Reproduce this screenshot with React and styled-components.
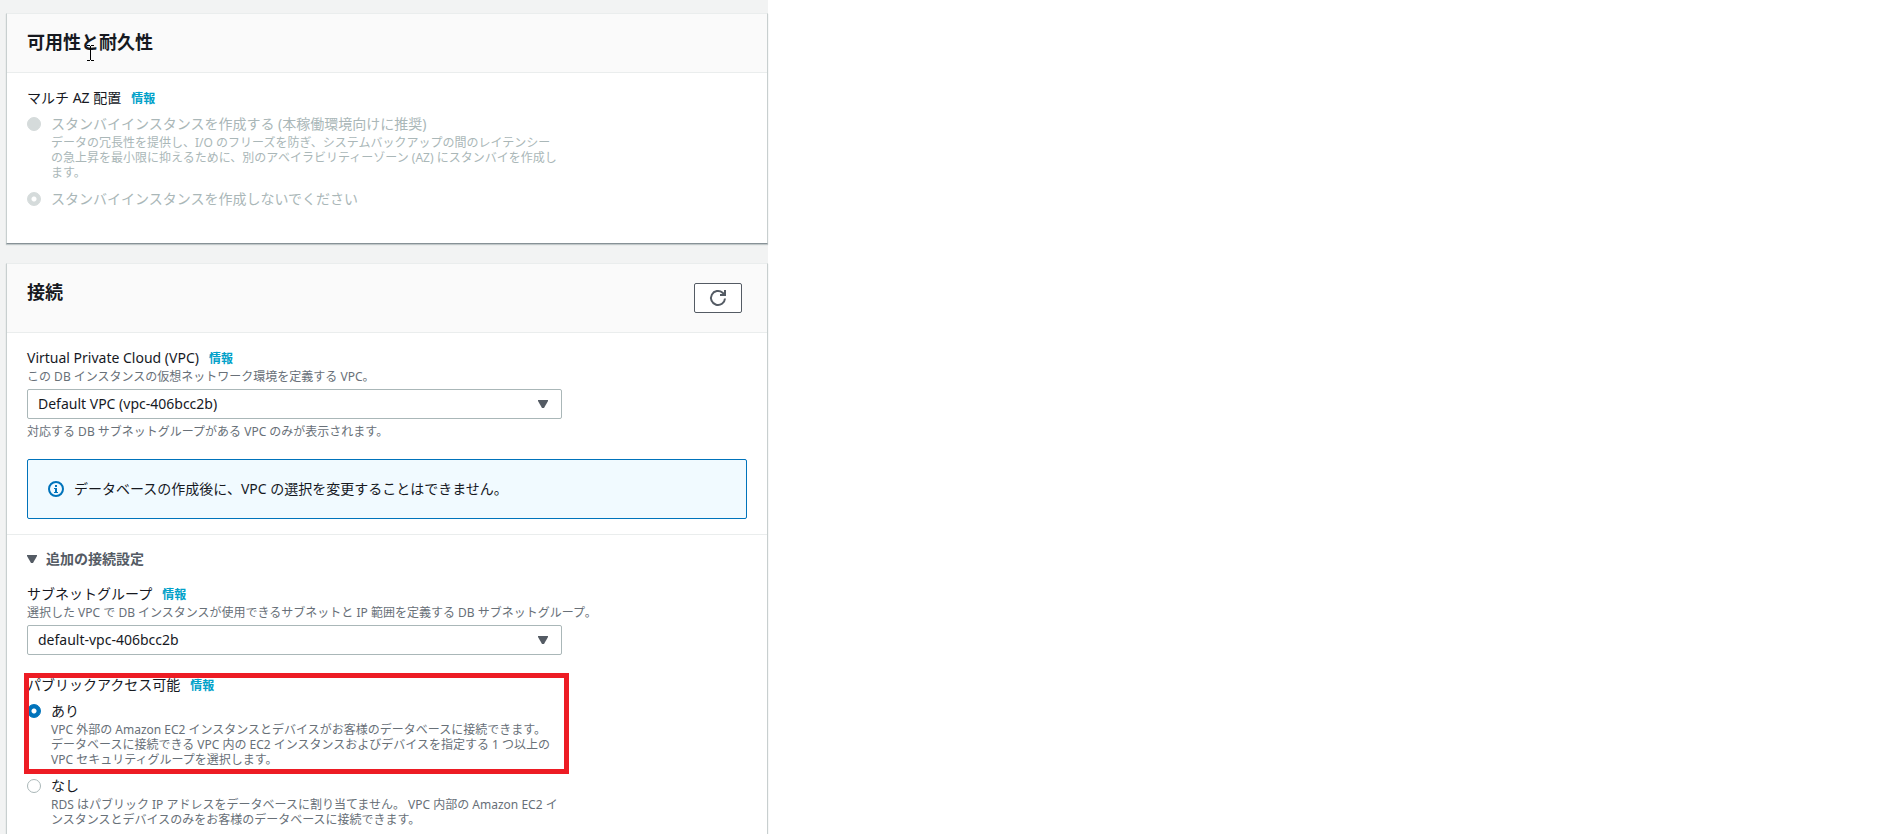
import React, { useState } from "react";
import styled, { createGlobalStyle, css } from "styled-components";

const GlobalStyle = createGlobalStyle`
  * {
    box-sizing: border-box;
  }
  body {
    margin: 0;
    background: #ffffff;
    color: #16191f;
    font-family: "Noto Sans", "Noto Sans CJK JP", sans-serif;
    font-size: 14px;
    line-height: 22px;
  }
`;

const Page = styled.main`
  display: flex;
  flex-direction: column;
  gap: 19px;
  width: 100%;
  max-width: 768px;
  min-height: 100vh;
  padding: 13px 0 0 6px;
  background: #f2f3f3;
`;
const Panel = styled.section`
  border: 1px solid #c8cfcf;
  border-top-color: #eaeded;
  border-bottom-color: #879196;
  background: #ffffff;
  box-shadow: 0 1px 1px rgba(0, 28, 36, 0.2);
  ${(p) =>
    p.$grow &&
    css`
      flex: 1;
      border-bottom: none;
    `}
`;
const Header = styled.header`
  display: flex;
  justify-content: space-between;
  align-items: flex-start;
  padding: 17px 25px 19px 20px;
  border-bottom: 1px solid #eaeded;
  background: #fafafa;
`;
const Title = styled.h2`
  position: relative;
  margin: 0;
  font-size: 18px;
  font-weight: bold;
  line-height: 22px;
`;
const Caret = styled.svg`
  position: absolute;
  left: 60px;
  top: 14px;
`;
const RefreshButton = styled.button`
  display: flex;
  align-items: center;
  justify-content: center;
  width: 48px;
  height: 30px;
  margin: 2px 0 0;
  padding: 0;
  border: 1px solid #545b64;
  border-radius: 2px;
  background: #ffffff;
  color: #545b64;
`;
const Content = styled.div`
  padding: 14px 20px ${(p) => p.$bottom || 0}px;
`;
const Field = styled.div`
  position: relative;
  max-width: 535px;
`;
const Group = styled.fieldset`
  position: relative;
  max-width: 535px;
  margin: 0;
  padding: 0;
  border: none;
`;
const LabelRow = styled.div`
  display: flex;
  align-items: baseline;
  gap: 10px;
`;
const Info = styled.a`
  color: #00a1c9;
  font-size: 12px;
  font-weight: bold;
  line-height: 15px;
  text-decoration: none;
`;
const Hint = styled.p`
  margin: 0;
  color: ${(p) => (p.$disabled ? "#aab7b8" : "#687078")};
  font-size: 12px;
  line-height: 15px;
  white-space: ${(p) => (p.$nowrap ? "nowrap" : "normal")};
`;
const SelectBox = styled.div`
  position: relative;
  margin: 5px 0;
`;
const Select = styled.select`
  display: block;
  width: 100%;
  height: 30px;
  padding: 0 32px 0 10px;
  border: 1px solid #aab7b8;
  border-radius: 2px;
  appearance: none;
  background: #ffffff;
  color: #16191f;
  font: inherit;
`;
const SelectArrow = styled.svg`
  position: absolute;
  top: 11px;
  right: 14px;
  pointer-events: none;
`;
const Option = styled.div`
  display: grid;
  grid-template-columns: 14px 1fr;
  column-gap: 10px;
  align-items: center;
  margin-top: ${(p) => (p.$first ? 4 : 8)}px;
  color: ${(p) => (p.$disabled ? "#aab7b8" : "#16191f")};
  & > p {
    grid-column: 2;
  }
`;
const Radio = styled.input`
  width: 14px;
  height: 14px;
  margin: 0;
  border: 1px solid #aab7b8;
  border-radius: 50%;
  appearance: none;
  background: #ffffff;
  &:checked {
    border-color: #0073bb;
    background: radial-gradient(circle, #ffffff 2px, #0073bb 3px);
  }
  &:disabled {
    border-color: #d5dbdb;
    background: #d5dbdb;
  }
  &:disabled:checked {
    background: radial-gradient(circle, #ffffff 2px, #d5dbdb 3px);
  }
`;
const Alert = styled.div`
  display: flex;
  align-items: center;
  gap: 10px;
  margin: 20px 0 15px;
  padding: 18px 20px;
  border: 1px solid #0073bb;
  border-radius: 2px;
  background: #f1faff;
`;
const Extra = styled.div`
  padding: 13px 20px 0;
  border-top: 1px solid #eaeded;
`;
const Toggle = styled.button`
  display: flex;
  align-items: center;
  gap: 9px;
  margin: 0 0 13px;
  padding: 0;
  border: none;
  background: none;
  color: #545b64;
  font: inherit;
  font-weight: bold;
`;
const Access = styled.div`
  position: relative;
  max-width: 535px;
  margin-top: 19px;
`;
const Highlight = styled.div`
  position: absolute;
  inset: -1px -7px -7px -3px;
  border: 5px solid #ed1c24;
  pointer-events: none;
`;

function Triangle() {
  return <path d="M0 0H10V1L6 8H4L0 1Z" fill="#545b64" />;
}

function SelectField({ id, label, hint, value, note }) {
  return (
    <Field>
      <LabelRow>
        <label htmlFor={id}>{label}</label>
        <Info href="#info">情報</Info>
      </LabelRow>
      <Hint $nowrap>{hint}</Hint>
      <SelectBox>
        <Select id={id} defaultValue={value}>
          <option value={value}>{value}</option>
        </Select>
        <SelectArrow width="10" height="8" viewBox="0 0 10 8">
          <Triangle />
        </SelectArrow>
      </SelectBox>
      {note && <Hint>{note}</Hint>}
    </Field>
  );
}

function RadioOption({ id, label, children, first, disabled, ...rest }) {
  return (
    <Option $first={first} $disabled={disabled}>
      <Radio type="radio" id={id} disabled={disabled} {...rest} />
      <label htmlFor={id}>{label}</label>
      {children && <Hint $disabled={disabled}>{children}</Hint>}
    </Option>
  );
}

function App() {
  const [open, setOpen] = useState(true);
  const [access, setAccess] = useState("yes");

  return (
    <>
      <GlobalStyle />
      <Page>
        <Panel>
          <Header>
            <Title>
              可用性と耐久性
              <Caret width="7" height="16" viewBox="0 0 7 16" aria-hidden="true">
                <path
                  d="M0 .5H3M4 .5H7M3.5 1V15M0 15.5H3M4 15.5H7"
                  stroke="#000000"
                  fill="none"
                />
              </Caret>
            </Title>
          </Header>
          <Content $bottom={33}>
            <Group aria-label="マルチ AZ 配置">
              <LabelRow>
                <span>マルチ AZ 配置</span>
                <Info href="#info">情報</Info>
              </LabelRow>
              <RadioOption
                first
                disabled
                id="standby-yes"
                name="standby"
                label="スタンバイインスタンスを作成する (本稼働環境向けに推奨)"
              >
                データの冗長性を提供し、I/O のフリーズを防ぎ、システムバックアップの間のレイテンシーの急上昇を最小限に抑えるために、別のアベイラビリティーゾーン (AZ) にスタンバイを作成します。
              </RadioOption>
              <RadioOption
                disabled
                defaultChecked
                id="standby-no"
                name="standby"
                label="スタンバイインスタンスを作成しないでください"
              />
            </Group>
          </Content>
        </Panel>

        <Panel $grow>
          <Header>
            <Title>接続</Title>
            <RefreshButton type="button" aria-label="更新">
              <svg width="18" height="18" viewBox="0 0 18 18" fill="none">
                <path
                  d="M16 9.5A7 7 0 1 1 13.6 3.7L15.5 5.5"
                  stroke="currentColor"
                  strokeWidth="2"
                />
                <path d="M17 1V7H11V5H15V1Z" fill="currentColor" />
              </svg>
            </RefreshButton>
          </Header>
          <Content>
            <SelectField
              id="vpc"
              label="Virtual Private Cloud (VPC)"
              hint="この DB インスタンスの仮想ネットワーク環境を定義する VPC。"
              value="Default VPC (vpc-406bcc2b)"
              note="対応する DB サブネットグループがある VPC のみが表示されます。"
            />
            <Alert>
              <svg width="16" height="16" viewBox="0 0 16 16" fill="none">
                <circle cx="8" cy="8" r="7" stroke="#0073bb" strokeWidth="2" />
                <path
                  d="M7 4H9V6H7ZM6 7H9V11H10V12H6V11H7V8H6Z"
                  fill="#0073bb"
                />
              </svg>
              <span>データベースの作成後に、VPC の選択を変更することはできません。</span>
            </Alert>
          </Content>
          <Extra>
            <Toggle type="button" aria-expanded={open} onClick={() => setOpen(!open)}>
              <svg width="10" height="8" viewBox="0 0 10 8">
                <Triangle />
              </svg>
              追加の接続設定
            </Toggle>
            {open && (
              <>
                <SelectField
                  id="subnet"
                  label="サブネットグループ"
                  hint="選択した VPC で DB インスタンスが使用できるサブネットと IP 範囲を定義する DB サブネットグループ。"
                  value="default-vpc-406bcc2b"
                />
                <Access role="group" aria-label="パブリックアクセス可能">
                  <LabelRow>
                    <span>パブリックアクセス可能</span>
                    <Info href="#info">情報</Info>
                  </LabelRow>
                  <RadioOption
                    first
                    id="public-yes"
                    name="public"
                    label="あり"
                    checked={access === "yes"}
                    onChange={() => setAccess("yes")}
                  >
                    VPC 外部の Amazon EC2 インスタンスとデバイスがお客様のデータベースに接続できます。
                    <br />
                    データベースに接続できる VPC 内の EC2 インスタンスおよびデバイスを指定する 1 つ以上の
                    VPC セキュリティグループを選択します。
                  </RadioOption>
                  <Highlight />
                </Access>
                <Group>
                  <RadioOption
                    id="public-no"
                    name="public"
                    label="なし"
                    checked={access === "no"}
                    onChange={() => setAccess("no")}
                  >
                    RDS はパブリック IP アドレスをデータベースに割り当てません。 VPC 内部の Amazon EC2 インスタンスとデバイスのみをお客様のデータベースに接続できます。
                  </RadioOption>
                </Group>
              </>
            )}
          </Extra>
        </Panel>
      </Page>
    </>
  );
}

export default App;
